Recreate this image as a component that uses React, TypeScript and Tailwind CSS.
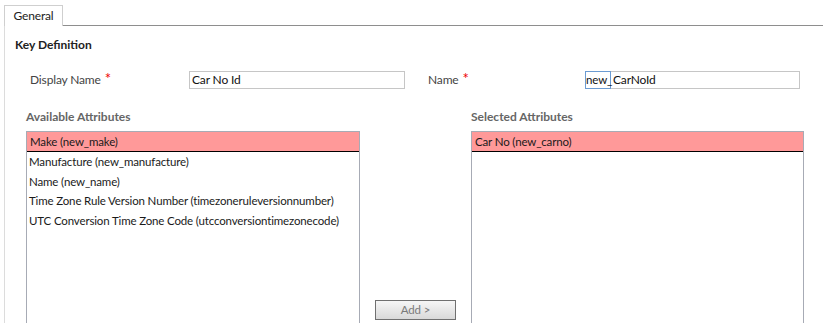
const available = [
  "Manufacture (new_manufacture)",
  "Name (new_name)",
  "Time Zone Rule Version Number (timezoneruleversionnumber)",
  "UTC Conversion Time Zone Code (utcconversiontimezonecode)",
];

function ListBox({ selected, items, width }: { selected: string; items: string[]; width: string }) {
  return (
    <div className={`${width} h-[200px] border border-[#a7abb5] bg-white`}>
      <div className="h-[20px] bg-[#ff9999] border-b border-black pl-[3px] leading-[19px] text-[#1a1a1a] whitespace-nowrap">{selected}</div>
      {items.map((item) => (
        <div key={item} className="h-[19.5px] pl-[2px] leading-[20px] text-[#1a1a1a] whitespace-nowrap">
          {item}
        </div>
      ))}
    </div>
  );
}

export default function App() {
  return (
    <div className="w-[823px] h-[323px] overflow-hidden bg-white text-[11.5px] tracking-[-0.15px] text-[#333] font-['Lato','Noto_Sans',sans-serif]">
      {/* tab strip */}
      <div className="flex h-[26px] pt-[5px] pl-[4px]">
        <div className="w-[59px] h-[21px] border border-b-0 border-[#cfcfcf] bg-white flex items-center justify-center text-[#222] text-[12px]">
          General
        </div>
        <div className="flex-1 border-b border-[#8e8e8e]" />
      </div>

      <div className="ml-[4px] h-[297px] border-l border-[#dcdcdc]">
        <div className="pt-[11px] pl-[10px] leading-[16px] font-bold text-[12px] tracking-normal text-[#222]">Key Definition</div>

        <div className="flex items-center mt-[18px] h-[18px]">
          <div className="w-[184px] pl-[25px] text-[12px] text-[#444] whitespace-nowrap">
            Display Name <span className="text-[#e00] text-[15px] leading-none ml-[1px]">*</span>
          </div>
          <div className="w-[216px] h-[18px] border border-[#c6c6c6] pl-[2px] leading-[16px] text-[12px] text-[#111]">Car No Id</div>
          <div className="w-[157px] ml-[23px] text-[12px] text-[#444] whitespace-nowrap">
            Name <span className="text-[#e00] text-[15px] leading-none ml-[1px]">*</span>
          </div>
          <div className="w-[26px] h-[18px] border border-[#6b9bd2] leading-[16px] text-[#111] whitespace-nowrap">new_</div>
          <div className="w-[189px] h-[18px] border border-l-0 border-[#c6c6c6] pl-[2px] leading-[16px] text-[12px] text-[#111]">CarNoId</div>
        </div>

        <div className="flex mt-[20px] pl-[21px]">
          <div className="flex flex-col">
            <div className="h-[16px] leading-[16px] mb-[6px] font-bold text-[12px] tracking-normal text-[#666]">Available Attributes</div>
            <ListBox selected="Make (new_make)" items={available} width="w-[334px]" />
          </div>
          <div className="w-[111px] flex justify-center">
            <button className="mt-[191px] w-[81px] h-[20px] border border-[#707070] bg-gradient-to-b from-[#f6f6f6] to-[#d9d9d9] text-[#7a7a7a] leading-[18px]">
              Add &gt;
            </button>
          </div>
          <div className="flex flex-col">
            <div className="h-[16px] leading-[16px] mb-[6px] font-bold text-[12px] tracking-normal text-[#666]">Selected Attributes</div>
            <ListBox selected="Car No (new_carno)" items={[]} width="w-[333px]" />
          </div>
        </div>
      </div>
    </div>
  );
}
